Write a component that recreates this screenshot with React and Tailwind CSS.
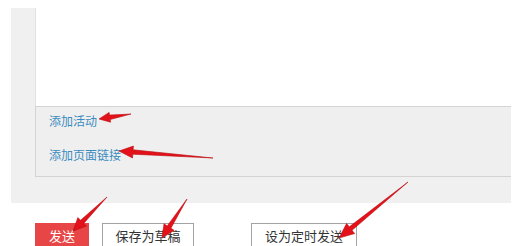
import React from 'react';

const arrowPoints = (tail, tip, headLen = 13, headW = 6, shaftW = 2.2) => {
  const [tx, ty] = tail;
  const [px, py] = tip;
  const dx = px - tx;
  const dy = py - ty;
  const len = Math.hypot(dx, dy);
  const ux = dx / len;
  const uy = dy / len;
  const nx = -uy;
  const ny = ux;
  const bx = px - ux * headLen;
  const by = py - uy * headLen;
  const pts = [
    [tx, ty],
    [bx + nx * shaftW, by + ny * shaftW],
    [bx + nx * headW, by + ny * headW],
    [px, py],
    [bx - nx * headW, by - ny * headW],
    [bx - nx * shaftW, by - ny * shaftW]
  ];
  return pts.map((p) => p.map((v) => v.toFixed(1)).join(',')).join(' ');
};

const arrows = [
  { tail: [131, 114], tip: [99, 119], head: 11, w: 5 },
  { tail: [213, 158], tip: [119, 151], head: 14, w: 6 },
  { tail: [107, 197], tip: [73, 231], head: 13, w: 6 },
  { tail: [187, 199], tip: [162, 238], head: 13, w: 6 },
  { tail: [408, 182], tip: [339, 238], head: 15, w: 6.5 }
];

export default function App() {
  return (
    <div
      className="relative w-[531px] h-[246px] overflow-hidden bg-white"
      style={{ fontFamily: '"Noto Sans CJK SC", "Liberation Sans", sans-serif' }}
    >
      {/* editor panel */}
      <div className="mt-[8px] ml-[11px] w-[500px] bg-[#f0f0f0] pl-[24px] pb-[26px]">
        <div className="h-[98px] bg-white border-l border-[#e2e2e2]" />
        <div className="h-[71px] border border-r-0 border-[#d4d4d4] bg-[#efefef] pl-[13px] pt-[6px] flex flex-col gap-[18px]">
          <a className="text-[12px] leading-[16px] text-[#3a8cbf]">添加活动</a>
          <a className="text-[12px] leading-[16px] text-[#3a8cbf]">添加页面链接</a>
        </div>
      </div>

      {/* actions */}
      <div className="mt-[20px] ml-[35px] flex items-start">
        <button className="w-[54px] h-[30px] bg-[#e84646] text-white text-[13px] pb-[4px]">
          发送
        </button>
        <button className="ml-[13px] w-[92px] h-[30px] border border-[#a3a3a3] bg-white text-[#333] text-[13px] pb-[4px]">
          保存为草稿
        </button>
        <button className="ml-[57px] w-[106px] h-[30px] border border-[#a3a3a3] bg-white text-[#333] text-[13px] pb-[4px]">
          设为定时发送
        </button>
      </div>

      {/* annotation arrows */}
      <svg className="absolute inset-0 pointer-events-none" width="531" height="246">
        {arrows.map((a, i) => (
          <polygon
            key={i}
            points={arrowPoints(a.tail, a.tip, a.head, a.w)}
            fill="#e3121a"
            stroke="#b80d12"
            strokeWidth="0.6"
            strokeLinejoin="round"
          />
        ))}
      </svg>
    </div>
  );
}
